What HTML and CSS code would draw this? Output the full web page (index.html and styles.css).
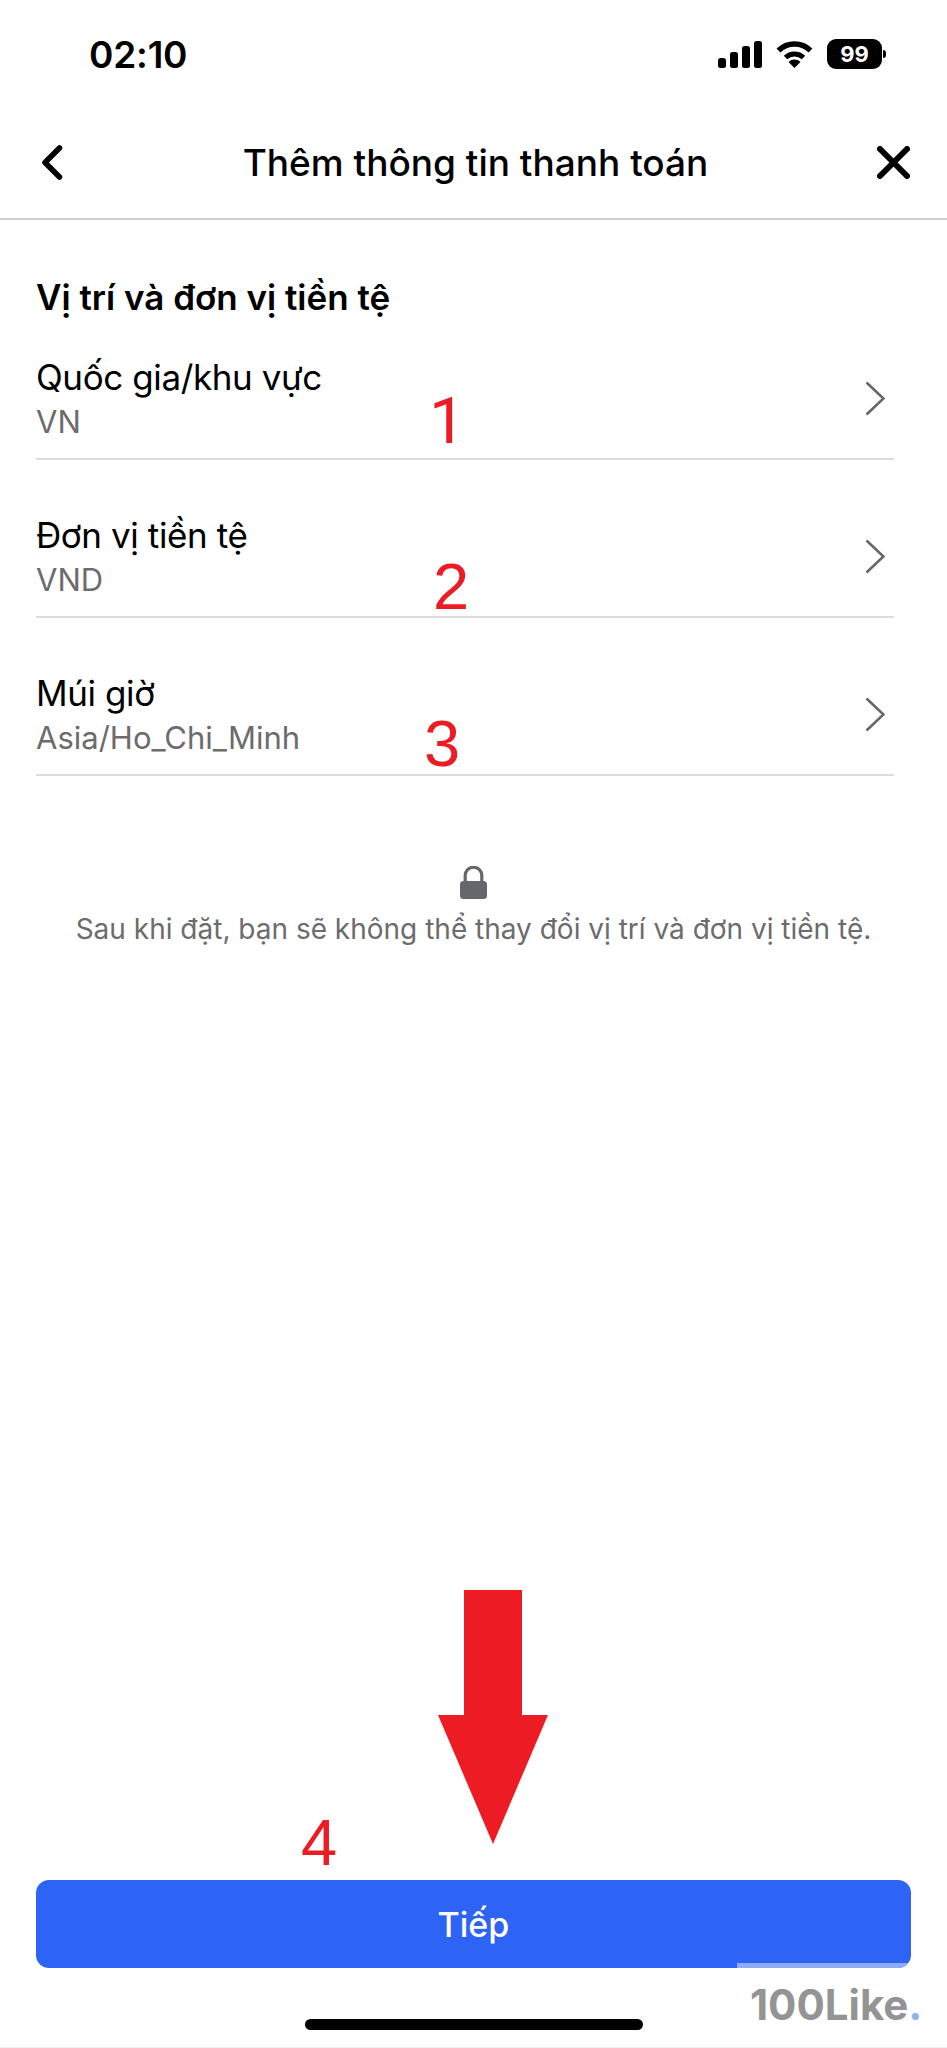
FILE: index.html
```html
<!DOCTYPE html>
<html lang="vi">
<head>
    <meta charset="UTF-8">
    <meta name="viewport" content="width=device-width, initial-scale=1.0">
    <title>Thêm thông tin thanh toán</title>
    <link rel="stylesheet" href="styles.css">
</head>
<body>
    <div class="page">
        <div class="status-bar">
            <span class="status-time">02:10</span>
            <div class="status-icons">
                <svg class="icon-signal" width="44" height="27" viewBox="0 0 44 27">
                    <rect x="0" y="17" width="8" height="10" rx="2.5"/>
                    <rect x="12" y="11" width="8" height="16" rx="2.5"/>
                    <rect x="24" y="5" width="8" height="22" rx="2.5"/>
                    <rect x="36" y="0" width="8" height="27" rx="2.5"/>
                </svg>
                <svg class="icon-wifi" width="37" height="28" viewBox="0 0 37 28">
                    <path d="M2.5 10.5A23 23 0 0 1 34.5 10.5" fill="none" stroke="#000" stroke-width="5.5"/>
                    <path d="M9.5 17.5A13 13 0 0 1 27.5 17.5" fill="none" stroke="#000" stroke-width="5"/>
                    <path d="M18.5 28L12.5 22A8.5 8.5 0 0 1 24.5 22Z"/>
                </svg>
                <div class="battery">
                    <span class="battery-level">99</span>
                    <span class="battery-nub"></span>
                </div>
            </div>
        </div>

        <div class="nav">
            <svg class="nav-back" width="22" height="35" viewBox="0 0 22 35">
                <path d="M18.5 3L4 17.5L18.5 32" fill="none" stroke="#000" stroke-width="5.5" stroke-linecap="round" stroke-linejoin="round"/>
            </svg>
            <h1 class="nav-title">Thêm thông tin thanh toán</h1>
            <svg class="nav-close" width="33" height="33" viewBox="0 0 33 33">
                <path d="M3 3L30 30M30 3L3 30" fill="none" stroke="#000" stroke-width="6" stroke-linecap="round"/>
            </svg>
        </div>

        <div class="content">
            <h2 class="section-title">Vị trí và đơn vị tiền tệ</h2>
            <div class="rows">
                <div class="row">
                    <div>
                        <div class="row-title">Quốc gia/khu vực</div>
                        <div class="row-value">VN</div>
                    </div>
                    <svg width="20" height="35" viewBox="0 0 20 35"><path d="M1.5 1.5L18.5 17.5L1.5 33.5" fill="none" stroke="#666" stroke-width="2.6"/></svg>
                </div>
                <div class="row">
                    <div>
                        <div class="row-title">Đơn vị tiền tệ</div>
                        <div class="row-value">VND</div>
                    </div>
                    <svg width="20" height="35" viewBox="0 0 20 35"><path d="M1.5 1.5L18.5 17.5L1.5 33.5" fill="none" stroke="#666" stroke-width="2.6"/></svg>
                </div>
                <div class="row">
                    <div>
                        <div class="row-title">Múi giờ</div>
                        <div class="row-value">Asia/Ho_Chi_Minh</div>
                    </div>
                    <svg width="20" height="35" viewBox="0 0 20 35"><path d="M1.5 1.5L18.5 17.5L1.5 33.5" fill="none" stroke="#666" stroke-width="2.6"/></svg>
                </div>
            </div>
            <div class="lock-note">
                <svg width="27" height="33" viewBox="0 0 27 33">
                    <path d="M5.2 17V9.5a8.3 8.3 0 0 1 16.6 0V17" fill="none" stroke="#65676b" stroke-width="3.2"/>
                    <rect x="0" y="15" width="27" height="18" rx="3.5" fill="#65676b"/>
                </svg>
                <p>Sau khi đặt, bạn sẽ không thể thay đổi vị trí và đơn vị tiền tệ.</p>
            </div>
        </div>

        <div class="footer">
            <button class="next-btn" type="button">Tiếp<span class="btn-strip"></span></button>
            <div class="home-bar"></div>
        </div>

        <!-- chu thich do ve len anh -->
        <span class="step step-1">1</span>
        <span class="step step-2">2</span>
        <span class="step step-3">3</span>
        <span class="step step-4">4</span>
        <svg class="step-arrow" width="110" height="254" viewBox="0 0 110 254">
            <path d="M26 0H84V125H110L55 254L0 125H26Z" fill="#ed1c24"/>
        </svg>
        <div class="watermark">100Like<span class="watermark-dot">.</span></div>
    </div>
</body>
</html>
```

FILE: styles.css
```css
* {
    box-sizing: border-box;
}
body {
    margin: 0;
    background-color: #fff;
    font-family: 'Inter', 'Liberation Sans', sans-serif;
    color: #000;
}
.page {
    position: relative;
    display: flex;
    flex-direction: column;
    width: 947px;
    height: 2048px;
    overflow: hidden;
    border-bottom: 1px solid #eeeeee;
}

/* status bar */
.status-bar {
    display: flex;
    justify-content: space-between;
    align-items: center;
    height: 108px;
    padding: 0 61px 0 89px;
}
.status-time {
    font-size: 37px;
    font-weight: 600;
    letter-spacing: -0.2px;
}
.status-icons {
    display: flex;
    align-items: center;
    gap: 14px;
}
.battery {
    position: relative;
    display: flex;
    justify-content: center;
    align-items: center;
    width: 55px;
    height: 30px;
    margin-right: 4px;
    background-color: #000;
    border-radius: 9px;
}
.battery-level {
    color: #fff;
    font-size: 22px;
    font-weight: 700;
}
.battery-nub {
    position: absolute;
    right: -4px;
    top: 11px;
    width: 3px;
    height: 8px;
    background-color: #000;
    border-radius: 0 3px 3px 0;
}

/* nav */
.nav {
    display: grid;
    grid-template-columns: 1fr auto 1fr;
    align-items: center;
    height: 112px;
    padding: 0 37px 2px 41px;
    border-bottom: 2px solid #cfcfcf;
}
.nav-title {
    margin: 0;
    font-size: 37px;
    font-weight: 500;
}
.nav-close {
    justify-self: end;
}

/* content */
.content {
    padding: 55px 53px 0 36px;
}
.section-title {
    margin: 0 0 36px;
    font-size: 35px;
    font-weight: 600;
    line-height: 44px;
}
.rows {
    display: flex;
    flex-direction: column;
    gap: 53px;
}
.row {
    display: flex;
    justify-content: space-between;
    align-items: center;
    padding: 0 9px 16px 0;
    border-bottom: 2px solid #dcdcdc;
}
.row-title {
    font-size: 35px;
    line-height: 44px;
    letter-spacing: -0.4px;
}
.row-value {
    margin-top: 3px;
    font-size: 31px;
    line-height: 40px;
    color: #6c6c6c;
}
.lock-note {
    display: flex;
    flex-direction: column;
    align-items: center;
    margin: 90px -53px 0 -36px;
}
.lock-note p {
    margin: 12px 0 0;
    font-size: 28px;
    line-height: 36px;
    color: #6c6c6c;
}

/* footer */
.footer {
    display: flex;
    flex-direction: column;
    align-items: center;
    margin-top: auto;
    padding: 0 36px 17px;
}
.next-btn {
    position: relative;
    width: 875px;
    height: 88px;
    overflow: hidden;
    background-color: #2d64f5;
    color: white;
    border: none;
    border-radius: 13px;
    font-family: inherit;
    font-size: 34px;
    font-weight: 500;
}
.btn-strip {
    position: absolute;
    right: 0;
    bottom: 0;
    width: 174px;
    height: 5px;
    background-color: #8eabf8;
}
.home-bar {
    width: 338px;
    height: 11px;
    margin-top: 51px;
    background-color: #000;
    border-radius: 6px;
}

/* annotations */
.step {
    position: absolute;
    font-family: 'Liberation Sans', sans-serif;
    font-size: 65px;
    line-height: 65px;
    color: #ed1c24;
}
.step-1 { left: 429px; top: 389px; font-family: 'Roboto', sans-serif; }
.step-2 { left: 433px; top: 554px; }
.step-3 { left: 424px; top: 711px; }
.step-4 { left: 301px; top: 1810px; }
.step-arrow {
    position: absolute;
    left: 438px;
    top: 1590px;
}
.watermark {
    position: absolute;
    left: 750px;
    top: 1980px;
    font-size: 42px;
    font-weight: 700;
    line-height: 50px;
    color: #949494;
}
.watermark-dot {
    color: #8ab4f0;
}
```
